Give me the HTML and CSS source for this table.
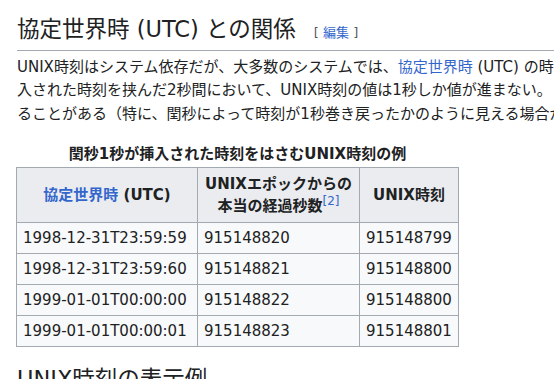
FILE: index.html
```html
<!DOCTYPE html>
<html lang="ja">
<head>
<meta charset="utf-8">
<title>UNIX時刻</title>
<link rel="stylesheet" href="styles.css">
</head>
<body>
<div class="page">
  <h2 class="heading"><span class="headline">協定世界時 (UTC) との関係</span><span class="edit"><span class="bracket">[</span> <a href="#">編集</a> <span class="bracket">]</span></span></h2>
  <p class="text">UNIX時刻はシステム依存だが、大多数のシステムでは、<a href="#">協定世界時</a> (UTC) の時刻で閏秒が挿<br>入された時刻を挟んだ2秒間において、UNIX時刻の値は1秒しか値が進まない。このため、UNIX時刻が減少す<br>ることがある（特に、閏秒によって時刻が1秒巻き戻ったかのように見える場合がある）。</p>
  <table class="wikitable">
    <caption class="caption">閏秒1秒が挿入された時刻をはさむUNIX時刻の例</caption>
    <colgroup>
      <col class="c1">
      <col class="c2">
      <col class="c3">
    </colgroup>
    <thead>
      <tr>
        <th><a href="#">協定世界時</a> (UTC)</th>
        <th>UNIXエポックからの<br>本当の経過秒数<sup class="ref"><a href="#">[2]</a></sup></th>
        <th>UNIX時刻</th>
      </tr>
    </thead>
    <tbody>
      <tr><td>1998-12-31T23:59:59</td><td>915148820</td><td>915148799</td></tr>
      <tr><td>1998-12-31T23:59:60</td><td>915148821</td><td>915148800</td></tr>
      <tr><td>1999-01-01T00:00:00</td><td>915148822</td><td>915148800</td></tr>
      <tr><td>1999-01-01T00:00:01</td><td>915148823</td><td>915148801</td></tr>
    </tbody>
  </table>
  <h2 class="heading next"><span class="headline">UNIX時刻の表示例</span></h2>
</div>
</body>
</html>
```

FILE: styles.css
```css
html, body {
  margin: 0;
  padding: 0;
}

body {
  font-family: "DejaVu Sans", "Noto Sans CJK JP", sans-serif;
  color: #202122;
  background: #ffffff;
  overflow: hidden;
}

a {
  color: #3366cc;
  text-decoration: none;
}

.page {
  width: 900px;
  padding: 15px 0 0 17px;
}

.heading {
  font-size: 22.5px;
  font-weight: normal;
  line-height: 29px;
  margin: 0;
  padding-bottom: 3px;
  border-bottom: 1px solid #a2a9b1;
}

.heading.next {
  margin-top: 18px;
}

.edit {
  font-size: 13px;
  margin-left: 18px;
  color: #54595d;
}

.text {
  font-size: 15px;
  line-height: 23.3px;
  margin: 5px 0 0;
  white-space: nowrap;
}

.wikitable {
  border-collapse: collapse;
  table-layout: fixed;
  width: 442px;
  margin: 17px 0 0 -1px;
  font-size: 15px;
  line-height: 22px;
  color: #202122;
}

.caption {
  font-weight: bold;
  line-height: 22px;
  padding-bottom: 2px;
  text-align: center;
}

.c1 { width: 181px; }
.c2 { width: 162px; }
.c3 { width: 99px; }

.wikitable th,
.wikitable td {
  border: 1px solid #a2a9b1;
}

.wikitable th {
  background: #eaecf0;
  padding: 5px 6px;
  font-weight: bold;
  text-align: center;
}

.wikitable td {
  background: #f8f9fa;
  padding: 4px 6px;
  text-align: left;
  white-space: nowrap;
}

.ref {
  font-size: 12px;
  font-weight: normal;
  line-height: 0;
  vertical-align: super;
}
```
